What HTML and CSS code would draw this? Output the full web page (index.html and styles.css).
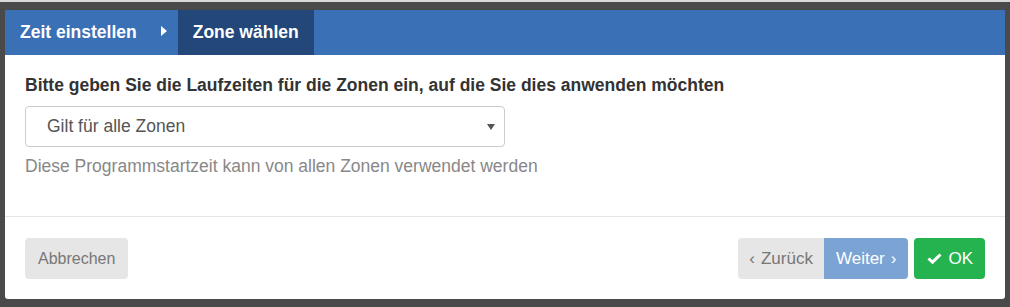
FILE: index.html
```html
<!DOCTYPE html>
<html lang="de">
<head>
    <meta charset="UTF-8">
    <title>Zone wählen</title>
    <link rel="stylesheet" href="styles.css">
</head>
<body>

<div class="top-line"></div>
<div class="backdrop">
    <div class="modal">
        <div class="steps">
            <div class="step">Zeit einstellen <span class="step-arrow"></span></div>
            <div class="step step-active">Zone wählen</div>
        </div>

        <div class="modal-body">
            <label class="field-label" for="zone">Bitte geben Sie die Laufzeiten für die Zonen ein, auf die Sie dies anwenden möchten</label>
            <div class="select" id="zone">
                <span>Gilt für alle Zonen</span>
                <span class="select-caret"></span>
            </div>
            <p class="help">Diese Programmstartzeit kann von allen Zonen verwendet werden</p>
        </div>

        <div class="modal-footer">
            <button type="button" class="btn btn-default">Abbrechen</button>
            <div class="footer-right">
                <div class="btn-group">
                    <button type="button" class="btn btn-default btn-prev"><span class="chev-left">&lsaquo;</span>Zurück</button>
                    <button type="button" class="btn btn-next">Weiter<span class="chev-right">&rsaquo;</span></button>
                </div>
                <button type="button" class="btn btn-ok">
                    <svg class="check" width="15" height="11" viewBox="0 0 15 11">
                        <path d="M1.5 5.5 L5.5 9.2 L13.5 1.5" fill="none" stroke="white" stroke-width="3"/>
                    </svg>
                    OK
                </button>
            </div>
        </div>
    </div>
</div>

</body>
</html>
```

FILE: styles.css
```css
* {
    margin: 0;
    box-sizing: border-box;
    font-family: "Liberation Sans", Arial, sans-serif;
}

body {
    background-color: #4a4a4a;
    height: 100vh;
    overflow: hidden;
}

.top-line {
    height: 2px;
    background-color: #d9d9d9;
}

.backdrop {
    padding: 8px 5px;
}

.modal {
    width: 1000px;
    background-color: white;
    border-radius: 0 0 3px 3px;
}

/* wizard steps */
.steps {
    display: flex;
    height: 45px;
    background-color: #3a70b6;
}

.step {
    display: flex;
    align-items: center;
    padding: 0 11px 0 15px;
    color: white;
    font-weight: bold;
    font-size: 17.5px;
}

.step-arrow {
    width: 0;
    height: 0;
    margin-left: 24px;
    margin-bottom: 3px;
    border-left: 6px solid white;
    border-top: 5px solid transparent;
    border-bottom: 5px solid transparent;
}

.step-active {
    background-color: #24477a;
    padding: 0 15px;
}

/* body */
.modal-body {
    padding: 18px 20px 38px 20px;
}

.field-label {
    display: block;
    margin-bottom: 9px;
    font-weight: bold;
    font-size: 17.5px;
    line-height: 24px;
    color: #333;
}

.select {
    display: flex;
    align-items: center;
    justify-content: space-between;
    width: 480px;
    height: 41px;
    padding: 0 9px 0 21px;
    border: 1px solid #ccc;
    border-radius: 4px;
    font-size: 17.5px;
    color: #555;
}

.select-caret {
    width: 0;
    height: 0;
    border-top: 6px solid #555;
    border-left: 4px solid transparent;
    border-right: 4px solid transparent;
}

.help {
    margin-top: 7px;
    font-size: 17.5px;
    line-height: 24px;
    color: #888;
}

/* footer */
.modal-footer {
    display: flex;
    justify-content: space-between;
    padding: 21px 20px 20px 20px;
    border-top: 1px solid #e5e5e5;
}

.footer-right {
    display: flex;
    gap: 6px;
}

.btn-group {
    display: flex;
}

.btn {
    display: flex;
    align-items: center;
    height: 41px;
    padding: 0 13px;
    border: none;
    border-radius: 4px;
    font-size: 16px;
}

.btn-default {
    background-color: #e6e6e6;
    color: #777;
}

.btn-prev {
    border-radius: 4px 0 0 4px;
    padding: 0 11px 0 11px;
    font-size: 17px;
}

.chev-left {
    margin-right: 6px;
}

.btn-next {
    border-radius: 0 4px 4px 0;
    background-color: #7ba3d3;
    color: white;
    padding: 0 12px 0 12px;
    font-size: 17px;
}

.chev-right {
    margin-left: 6px;
}

.btn-ok {
    background-color: #25b34f;
    color: white;
    padding: 0 12px 0 13px;
    gap: 6px;
    font-size: 17px;
}
```
